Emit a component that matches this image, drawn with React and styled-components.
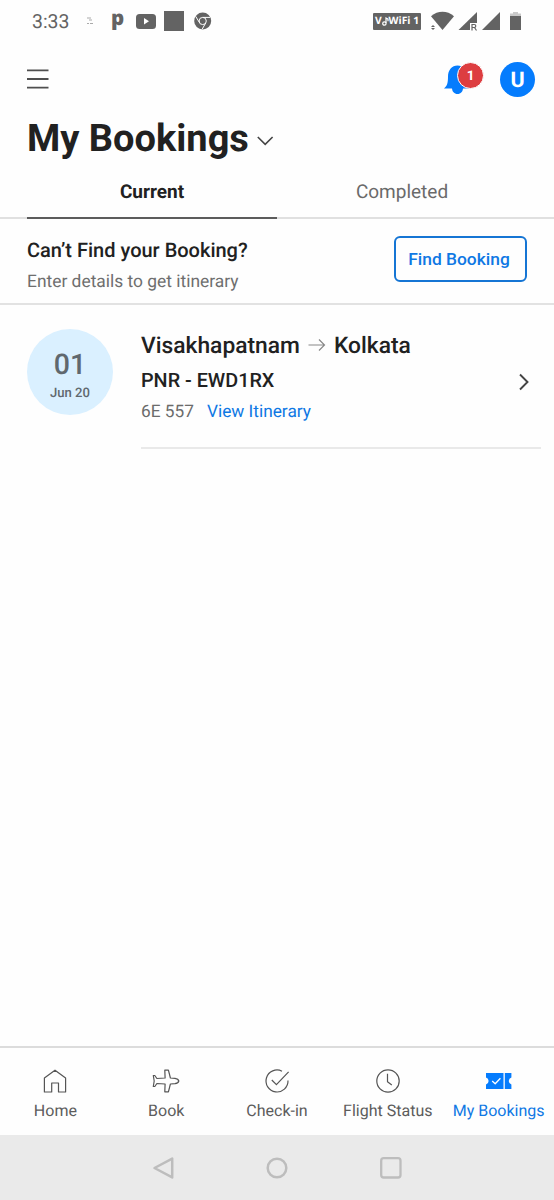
import React from "react";
import styled, { createGlobalStyle } from "styled-components";

const GlobalStyle = createGlobalStyle`
  * { box-sizing: border-box; }
  body { margin: 0; background: #fefefe; font-family: Roboto, "Liberation Sans", sans-serif; text-rendering: geometricPrecision; }
  svg { display: block; flex: none; }
`;

const LINK_BLUE = "#0f78e4";

const Screen = styled.div`
  width: 554px;
  height: 1200px;
  display: flex;
  flex-direction: column;
  background: #fefefe;
  color: #212121;
  overflow: hidden;
`;

const StatusBar = styled.div`
  height: 42px;
  flex: none;
  display: flex;
  justify-content: space-between;
  align-items: center;
  padding: 0 32px;
  color: #636363;
`;

const StatusGroup = styled.div`
  display: flex;
  align-items: center;
`;

const AppIcons = styled.div`
  display: flex;
  align-items: center;
  gap: 8px;
`;

const Clock = styled.span`
  width: 54px;
  padding-top: 1px;
  font-size: 19.4px;
  line-height: 24px;
`;

const PMark = styled.span`
  width: 25px;
  margin: -6px 0 0 17px;
  font: 800 20.5px/24px "Open Sans", sans-serif;
`;

const WifiBadge = styled.span`
  width: 48px;
  height: 17px;
  margin-right: 9px;
  display: flex;
  align-items: center;
  justify-content: center;
  background: #636363;
  border-radius: 1px;
  color: #fff;
  font: 700 10.3px/17px "Open Sans", sans-serif;
  white-space: nowrap;
`;

const Header = styled.header`
  height: 74px;
  flex: none;
  display: flex;
  align-items: center;
  padding: 0 19px 0 27px;
`;

const BellButton = styled.div`
  position: relative;
  margin-left: auto;
  margin-right: 16px;
  width: 40px;
  height: 36px;
`;

const Badge = styled.span`
  position: absolute;
  left: 13px;
  top: 1px;
  width: 27px;
  height: 27px;
  border: 1.5px solid #fff;
  border-radius: 50%;
  background: #dd3d40;
  color: #fff;
  font-size: 13.5px;
  font-weight: 700;
  line-height: 26px;
  text-align: center;
`;

const Avatar = styled.div`
  width: 35px;
  height: 35px;
  border-radius: 50%;
  background: #057cfd;
  color: #fff;
  font-size: 21.5px;
  font-weight: 700;
  line-height: 37px;
  text-align: center;
`;

const TitleRow = styled.div`
  height: 44px;
  flex: none;
  display: flex;
  align-items: center;
  padding-left: 27px;
`;

const Title = styled.h1`
  width: 230px;
  margin: 0;
  padding-top: 2px;
  font-size: 38px;
  font-weight: 700;
  line-height: 46px;
  white-space: nowrap;
`;

const TitleChevron = styled.svg`
  margin-top: 4px;
`;

const Tabs = styled.div`
  height: 59px;
  flex: none;
  display: flex;
  padding: 0 27px;
  border-bottom: 2px solid #e0e0e0;
`;

const Tab = styled.div`
  flex: 1;
  height: 59px;
  padding-top: 19px;
  border-bottom: 2px solid ${(p) => (p.$active ? "#5c5c5c" : "transparent")};
  color: ${(p) => (p.$active ? "#212121" : "#6a6a6a")};
  font-size: 19px;
  font-weight: ${(p) => (p.$active ? 700 : 400)};
  line-height: 25px;
  text-align: center;
`;

const FindRow = styled.section`
  height: 86px;
  flex: none;
  display: flex;
  justify-content: space-between;
  padding: 17px 27px 0;
  border-bottom: 2px solid #e2e2e2;
`;

const FindTitle = styled.div`
  margin-top: 2px;
  font-size: 20px;
  font-weight: 500;
  line-height: 24px;
`;

const FindHint = styled.div`
  margin-top: 8px;
  color: #6e6e6e;
  font-size: 17.4px;
  line-height: 24px;
`;

const FindButton = styled.button`
  width: 133px;
  height: 46px;
  padding: 0 3px 0 0;
  border: 2px solid #1575d4;
  border-radius: 6px;
  background: transparent;
  color: ${LINK_BLUE};
  font: 500 17.4px/24px Roboto, sans-serif;
`;

const BookingRow = styled.article`
  display: flex;
  padding: 24px 13px 0 27px;
`;

const DateCircle = styled.div`
  width: 86px;
  height: 86px;
  flex: none;
  display: flex;
  flex-direction: column;
  align-items: center;
  padding-top: 20px;
  border-radius: 50%;
  background: #daf0ff;
  color: #60686e;
`;

const Day = styled.span`
  font-size: 28.5px;
  font-weight: 500;
  line-height: 32px;
`;

const Month = styled.span`
  margin-top: 4px;
  font-size: 13.1px;
  font-weight: 500;
  line-height: 18px;
`;

const BookingBody = styled.div`
  width: 400px;
  height: 120px;
  margin-left: 28px;
  display: flex;
  align-items: flex-start;
  justify-content: space-between;
  padding-right: 11px;
  border-bottom: 2px solid #e9e9e9;
`;

const RowChevron = styled.svg`
  margin-top: 44px;
`;

const Route = styled.div`
  display: flex;
  align-items: center;
  gap: 8px;
  height: 32px;
  font-size: 22.8px;
  font-weight: 500;
`;

const Pnr = styled.div`
  margin-top: 8px;
  font-size: 19.8px;
  font-weight: 500;
  line-height: 24px;
`;

const FlightLine = styled.div`
  display: flex;
  gap: 13px;
  margin-top: 7px;
  color: #6b6b6b;
  font-size: 17.3px;
  line-height: 24px;
`;

const ItineraryLink = styled.a`
  color: ${LINK_BLUE};
`;

const BottomNav = styled.nav`
  height: 89px;
  flex: none;
  display: flex;
  margin-top: auto;
  border-top: 2px solid #dcdcdc;
`;

const NavItem = styled.div`
  flex: 1;
  display: flex;
  flex-direction: column;
  align-items: center;
  padding-top: 18px;
  color: ${(p) => (p.$active ? LINK_BLUE : "#5c5c5c")};
`;

const NavLabel = styled.span`
  margin-top: 3px;
  font-size: 16px;
  line-height: 24px;
  white-space: nowrap;
`;

const SystemNav = styled.div`
  height: 65px;
  flex: none;
  display: flex;
  justify-content: center;
  align-items: center;
  gap: 90px;
  background: #eaeaea;
`;

const SIGNAL = "M18 0V18H0Z";

const icons = {
  home: <path d="M4.400 12 15 4.200 25.600 12v14h-7.100v-9h-6.800v9H4.400Z" />,
  plane: (
    <path d="M2.300 9.500h1.500l2.100 3 8.200-.5L13.800 4.200h3.600l2 7.800 4.600.4c2.100.3 3.500 1.200 3.800 2.600-.3 1.400-1.700 2.300-3.800 2.600l-4.600.4-2 7.800h-3.600l.3-7.800-8.200-.5-2.100 3H2.300L3.200 15Z" />
  ),
  check: (
    <>
      <path d="M20 5.200A11 11 0 1 0 26 14.600" />
      <path d="m9.800 14 4.600 4.700L26.600 5.800" />
    </>
  ),
  clock: (
    <>
      <circle cx="15" cy="15" r="11.200" />
      <path d="M14.500 7.800v8l4.300 3.300" />
    </>
  ),
  ticket: (
    <>
      <path
        d="M2 7h17.500v16H2v-4.400a3.800 3.800 0 0 0 0-7.200ZM20.800 7H27.400v4.400a3.800 3.800 0 0 0 0 7.200V23h-6.600Z"
        fill="#057cfd"
        stroke="none"
      />
      <path d="m8.200 15 3 2.800 5.200-5.500" stroke="#fff" strokeWidth="1.300" />
    </>
  ),
};

function NavIcon({ name }) {
  return (
    <svg width="30" height="30" viewBox="0 0 30 30" fill="none" stroke="#555" strokeWidth="1.200" strokeLinejoin="round">
      {icons[name]}
    </svg>
  );
}

const tabs = [
  ["home", "Home"],
  ["plane", "Book"],
  ["check", "Check-in"],
  ["clock", "Flight Status"],
  ["ticket", "My Bookings"],
];

export default function App() {
  return (
    <>
      <GlobalStyle />
      <Screen>
        <StatusBar>
          <StatusGroup>
            <Clock>3:33</Clock>
            <svg width="8" height="8" viewBox="0 0 8 8" fill="none" stroke="#aaa">
              <path d="M1 1h4M3 3h3M1 6.500h2M4 6.500h3" />
            </svg>
            <PMark>p</PMark>
            <AppIcons>
              <svg width="20" height="15" viewBox="0 0 20 15">
                <rect width="20" height="15" rx="3.500" fill="#636363" />
                <path d="m8 4 5 3.300-5 3.300Z" fill="#fff" />
              </svg>
              <svg width="20" height="20" viewBox="0 0 20 20">
                <rect width="20" height="20" fill="#636363" />
              </svg>
              <svg width="20" height="18" viewBox="0 0 20 18">
                <circle cx="10.700" cy="9" r="8.500" fill="#636363" />
                <g fill="none" stroke="#fff" strokeWidth="1">
                  <circle cx="10.700" cy="9" r="3.600" />
                  <path d="M10.700 5.400h7.500M7.600 10.800 3.700 4.400M13.800 10.800l-3.700 6.500" />
                </g>
              </svg>
            </AppIcons>
          </StatusGroup>
          <StatusGroup>
            <WifiBadge>
              V
              <svg width="7" height="11" viewBox="0 0 7 11" fill="none" stroke="#fff" strokeWidth="1.200">
                <circle cx="2.400" cy="7.500" r="1.700" />
                <path d="M4 7V2l2 1.200v2" />
              </svg>
              WiFi 1
            </WifiBadge>
            <svg width="92" height="20" viewBox="0 0 92 20" fill="#636363">
              <path d="M1 5.200C8-.6 17-.6 24 5.200L12.500 19Z" />
              <path d="m1 16 2-2 2 2ZM1 17l2 2 2-2Z" />
              <path d="M47 1v18H28.500Z" />
              <path d="M40 12h8v8h-8Z" fill="#fefefe" />
              <path d="M42 19.500v-6h2.300a1.400 1.400 0 0 1 0 3H42m2.500 0 2 3" fill="none" stroke="#636363" strokeWidth="1.200" />
              <path d={SIGNAL} transform="translate(52 1)" />
              <path d="M80 5h11v14H80Z" />
              <path d="M83 1h5v1.500h3V5H80V2.500h3Z" fill="#c9c9c9" />
            </svg>
          </StatusGroup>
        </StatusBar>

        <Header>
          <svg width="22" height="22" viewBox="0 0 22 22" stroke="#4f4f4f" strokeWidth="1.800">
            <path d="M0 2.300h21.500M0 11h21.500M0 19.700h21.500" />
          </svg>
          <BellButton>
            <svg width="32" height="36" viewBox="0 0 32 36" fill="#057cfd">
              <path d="M0 27.500c3-2.500 4-5 4-12C4 9 8 4.500 13.500 4.500S23 9 23 15.500c0 7 1 9.500 4 12Z" />
              <path d="M8 27h11c0 3.500-2.300 6-5.500 6S8 30.500 8 27Z" />
            </svg>
            <Badge>1</Badge>
          </BellButton>
          <Avatar>U</Avatar>
        </Header>

        <TitleRow>
          <Title>My Bookings</Title>
          <TitleChevron width="17" height="12" viewBox="0 0 17 12" fill="none" stroke="#444" strokeWidth="1.600">
            <path d="m.8 3 7.400 7.400L15.600 3" />
          </TitleChevron>
        </TitleRow>

        <Tabs>
          <Tab $active>Current</Tab>
          <Tab>Completed</Tab>
        </Tabs>

        <FindRow>
          <div>
            <FindTitle>Can’t Find your Booking?</FindTitle>
            <FindHint>Enter details to get itinerary</FindHint>
          </div>
          <FindButton>Find Booking</FindButton>
        </FindRow>

        <BookingRow>
          <DateCircle>
            <Day>01</Day>
            <Month>Jun 20</Month>
          </DateCircle>
          <BookingBody>
            <div>
              <Route>
                <span>Visakhapatnam</span>
                <svg width="18" height="14" viewBox="0 0 18 14" fill="none" stroke="#888" strokeWidth="1.200">
                  <path d="M.5 7H16.500M11 1.500 16.500 7 11 12.500" />
                </svg>
                <span>Kolkata</span>
              </Route>
              <Pnr>PNR - EWD1RX</Pnr>
              <FlightLine>
                <span>6E 557</span>
                <ItineraryLink>View Itinerary</ItineraryLink>
              </FlightLine>
            </div>
            <RowChevron width="12" height="18" viewBox="0 0 12 18" fill="none" stroke="#444" strokeWidth="1.900">
              <path d="m2 1.500 7.500 7.500L2 16.500" />
            </RowChevron>
          </BookingBody>
        </BookingRow>

        <BottomNav>
          {tabs.map(([icon, label]) => (
            <NavItem key={icon} $active={icon === "ticket"}>
              <NavIcon name={icon} />
              <NavLabel>{label}</NavLabel>
            </NavItem>
          ))}
        </BottomNav>

        <SystemNav>
          <svg width="24" height="24" viewBox="0 0 24 24" fill="none" stroke="#bdbdbd" strokeWidth="2.500" strokeLinejoin="round">
            <path d="M3.500 12 21.200 2.600v18.800Z" />
          </svg>
          <svg width="24" height="24" viewBox="0 0 24 24" fill="none" stroke="#bdbdbd" strokeWidth="2.500">
            <circle cx="12" cy="12" r="9.300" />
          </svg>
          <svg width="24" height="24" viewBox="0 0 24 24" fill="none" stroke="#bdbdbd" strokeWidth="2.300">
            <rect x="2.200" y="2.200" width="19.300" height="19.300" rx="2.500" />
          </svg>
        </SystemNav>
      </Screen>
    </>
  );
}
